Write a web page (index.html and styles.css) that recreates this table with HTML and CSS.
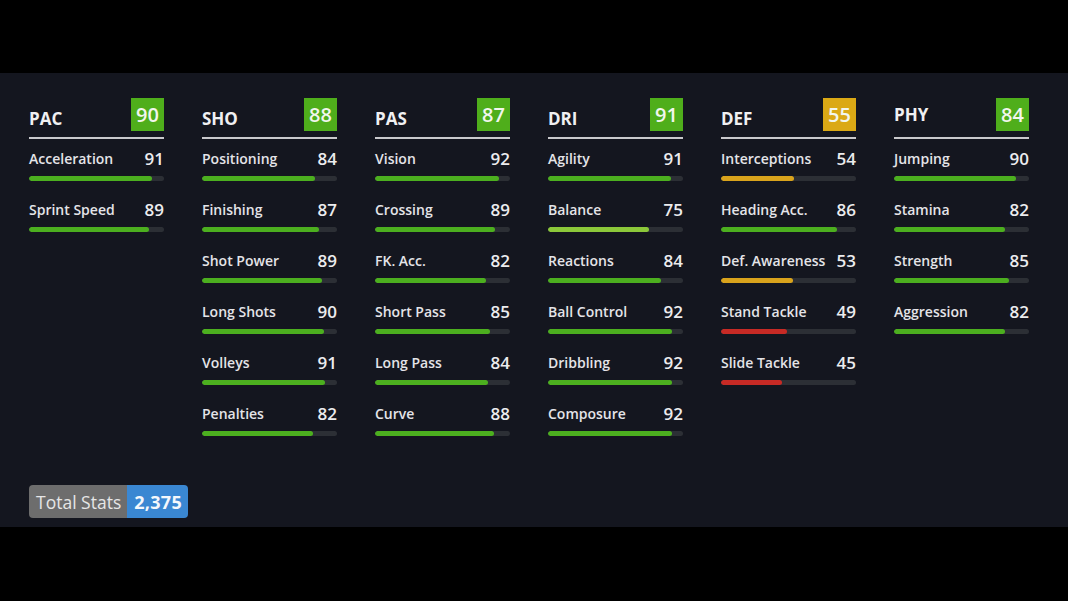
FILE: index.html
```html
<!DOCTYPE html>
<html>
<head>
<meta charset="utf-8">
<link rel="stylesheet" href="styles.css">
</head>
<body>
<div class="band"></div>
<main class="panel">
  <div class="cols">
    <section class="col">
      <header class="head"><span class="label">PAC</span><span class="badge green">90</span></header>
      <div class="row"><div class="line"><span>Acceleration</span><b>91</b></div><div class="track"><div class="fill green" style="width:91%"></div></div></div>
      <div class="row"><div class="line"><span>Sprint Speed</span><b>89</b></div><div class="track"><div class="fill green" style="width:89%"></div></div></div>
    </section>
    <section class="col">
      <header class="head"><span class="label">SHO</span><span class="badge green">88</span></header>
      <div class="row"><div class="line"><span>Positioning</span><b>84</b></div><div class="track"><div class="fill green" style="width:84%"></div></div></div>
      <div class="row"><div class="line"><span>Finishing</span><b>87</b></div><div class="track"><div class="fill green" style="width:87%"></div></div></div>
      <div class="row"><div class="line"><span>Shot Power</span><b>89</b></div><div class="track"><div class="fill green" style="width:89%"></div></div></div>
      <div class="row"><div class="line"><span>Long Shots</span><b>90</b></div><div class="track"><div class="fill green" style="width:90%"></div></div></div>
      <div class="row"><div class="line"><span>Volleys</span><b>91</b></div><div class="track"><div class="fill green" style="width:91%"></div></div></div>
      <div class="row"><div class="line"><span>Penalties</span><b>82</b></div><div class="track"><div class="fill green" style="width:82%"></div></div></div>
    </section>
    <section class="col">
      <header class="head"><span class="label">PAS</span><span class="badge green">87</span></header>
      <div class="row"><div class="line"><span>Vision</span><b>92</b></div><div class="track"><div class="fill green" style="width:92%"></div></div></div>
      <div class="row"><div class="line"><span>Crossing</span><b>89</b></div><div class="track"><div class="fill green" style="width:89%"></div></div></div>
      <div class="row"><div class="line"><span>FK. Acc.</span><b>82</b></div><div class="track"><div class="fill green" style="width:82%"></div></div></div>
      <div class="row"><div class="line"><span>Short Pass</span><b>85</b></div><div class="track"><div class="fill green" style="width:85%"></div></div></div>
      <div class="row"><div class="line"><span>Long Pass</span><b>84</b></div><div class="track"><div class="fill green" style="width:84%"></div></div></div>
      <div class="row"><div class="line"><span>Curve</span><b>88</b></div><div class="track"><div class="fill green" style="width:88%"></div></div></div>
    </section>
    <section class="col">
      <header class="head"><span class="label">DRI</span><span class="badge green">91</span></header>
      <div class="row"><div class="line"><span>Agility</span><b>91</b></div><div class="track"><div class="fill green" style="width:91%"></div></div></div>
      <div class="row"><div class="line"><span>Balance</span><b>75</b></div><div class="track"><div class="fill lime" style="width:75%"></div></div></div>
      <div class="row"><div class="line"><span>Reactions</span><b>84</b></div><div class="track"><div class="fill green" style="width:84%"></div></div></div>
      <div class="row"><div class="line"><span>Ball Control</span><b>92</b></div><div class="track"><div class="fill green" style="width:92%"></div></div></div>
      <div class="row"><div class="line"><span>Dribbling</span><b>92</b></div><div class="track"><div class="fill green" style="width:92%"></div></div></div>
      <div class="row"><div class="line"><span>Composure</span><b>92</b></div><div class="track"><div class="fill green" style="width:92%"></div></div></div>
    </section>
    <section class="col">
      <header class="head"><span class="label">DEF</span><span class="badge yellow">55</span></header>
      <div class="row"><div class="line"><span>Interceptions</span><b>54</b></div><div class="track"><div class="fill yellow" style="width:54%"></div></div></div>
      <div class="row"><div class="line"><span>Heading Acc.</span><b>86</b></div><div class="track"><div class="fill green" style="width:86%"></div></div></div>
      <div class="row"><div class="line"><span>Def. Awareness</span><b>53</b></div><div class="track"><div class="fill yellow" style="width:53%"></div></div></div>
      <div class="row"><div class="line"><span>Stand Tackle</span><b>49</b></div><div class="track"><div class="fill red" style="width:49%"></div></div></div>
      <div class="row"><div class="line"><span>Slide Tackle</span><b>45</b></div><div class="track"><div class="fill red" style="width:45%"></div></div></div>
    </section>
    <section class="col">
      <header class="head"><span class="label raised">PHY</span><span class="badge green">84</span></header>
      <div class="row"><div class="line"><span>Jumping</span><b>90</b></div><div class="track"><div class="fill green" style="width:90%"></div></div></div>
      <div class="row"><div class="line"><span>Stamina</span><b>82</b></div><div class="track"><div class="fill green" style="width:82%"></div></div></div>
      <div class="row"><div class="line"><span>Strength</span><b>85</b></div><div class="track"><div class="fill green" style="width:85%"></div></div></div>
      <div class="row"><div class="line"><span>Aggression</span><b>82</b></div><div class="track"><div class="fill green" style="width:82%"></div></div></div>
    </section>
  </div>
  <div class="total"><span class="total-label">Total Stats</span><span class="total-value">2,375</span></div>
</main>
<div class="band"></div>
</body>
</html>
```

FILE: styles.css
```css
* { box-sizing: border-box; }
html, body { margin: 0; padding: 0; }
body {
  background: #000;
  width: 1068px;
  height: 601px;
  overflow: hidden;
  font-family: "Open Sans", "Noto Sans", sans-serif;
  color: #e8e8ea;
}
.band { height: 73px; background: #000; }
.panel {
  height: 454px;
  background: #14161f;
  padding: 25px 29px 9px;
  display: flex;
  flex-direction: column;
}
.cols {
  display: grid;
  grid-template-columns: repeat(6, 135px);
  column-gap: 38px;
  align-items: start;
}
.col { display: flex; flex-direction: column; }
.head {
  display: flex;
  justify-content: space-between;
  align-items: flex-end;
  border-bottom: 2px solid #c9c9cc;
  padding-bottom: 6px;
  height: 41px;
}
.label {
  font-size: 17px;
  font-weight: 700;
  color: #f0f0f2;
  line-height: 20px;
  margin-bottom: 2px;
}
.label.raised { margin-bottom: 6px; }
.badge {
  width: 33px;
  height: 33px;
  display: flex;
  align-items: center;
  justify-content: center;
  font-size: 20px;
  font-weight: 600;
  color: #f2f6ee;
}
.badge.green { background: #4fae1b; }
.badge.yellow { background: #dba915; }
.row { padding-top: 10px; margin-bottom: 9px; }
.line {
  display: flex;
  justify-content: space-between;
  align-items: center;
  height: 19px;
}
.line span { font-size: 14px; font-weight: 600; color: #e4e4e8; }
.line b { font-size: 17px; font-weight: 600; color: #ececee; }
.track {
  margin-top: 8px;
  height: 5px;
  border-radius: 3px;
  background: #2c2f35;
  overflow: hidden;
}
.fill { height: 100%; border-radius: 3px; }
.fill.green { background: #4caf1f; }
.fill.lime { background: #8cc83a; }
.fill.yellow { background: #d9a31c; }
.fill.red { background: #c72a25; }
.total {
  margin-top: auto;
  display: flex;
  align-self: flex-start;
  height: 33px;
  border-radius: 4px;
  overflow: hidden;
}
.total-label {
  background: #6d6d6d;
  color: #e6e6e6;
  font-size: 17.5px;
  padding: 0 6px 0 7px;
  display: flex;
  align-items: center;
}
.total-value {
  background: #3a87d2;
  color: #f4f8fc;
  font-size: 18px;
  font-weight: 700;
  letter-spacing: 0.3px;
  padding: 0 6px 0 7px;
  display: flex;
  align-items: center;
}
```
